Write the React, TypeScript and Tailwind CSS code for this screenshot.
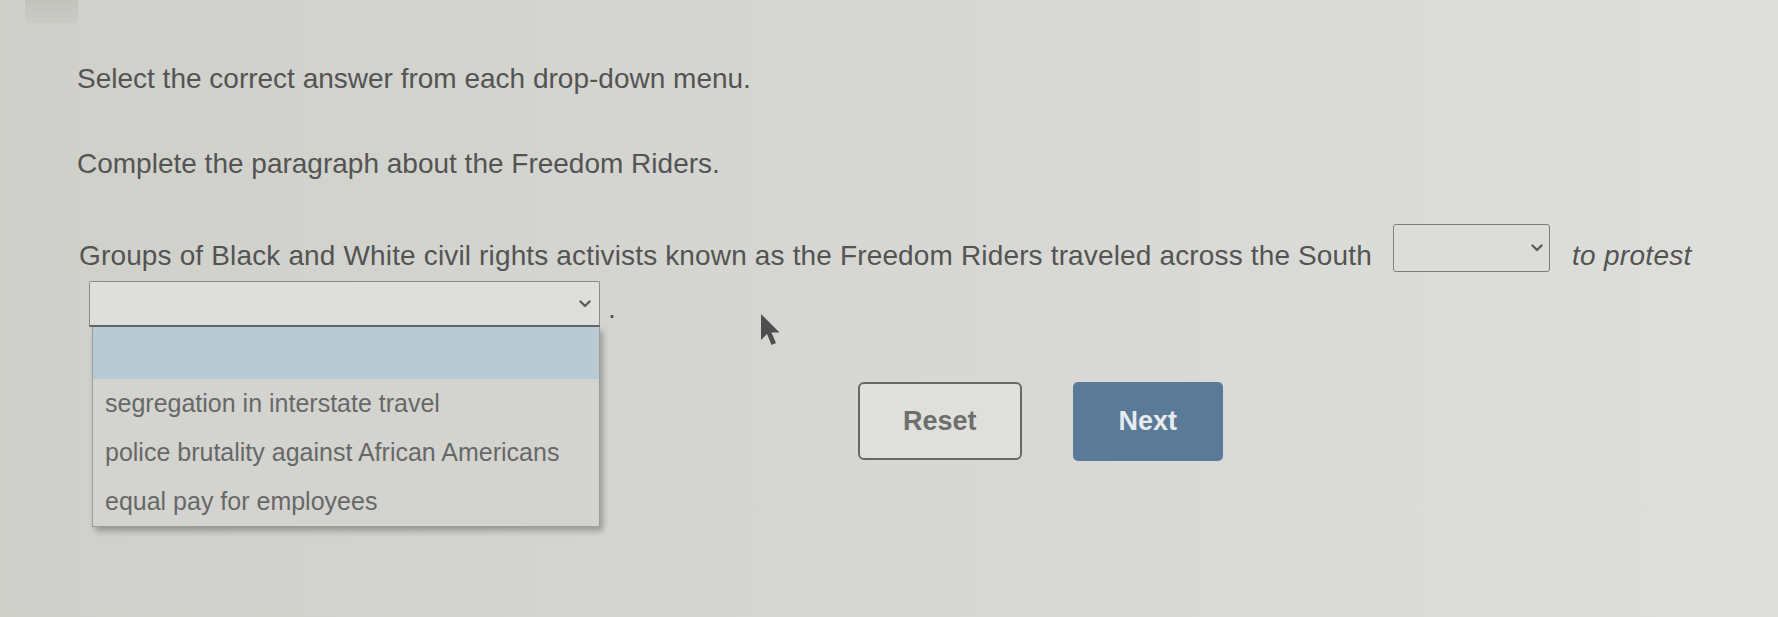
import React from "react";

const options = [
  "segregation in interstate travel",
  "police brutality against African Americans",
  "equal pay for employees",
];

function Chevron() {
  return (
    <svg width="12" height="8" viewBox="0 0 12 8" fill="none">
      <polyline points="1.5,1.5 6,6 10.5,1.5" stroke="#5e5e5e" strokeWidth="2.4" strokeLinecap="round" strokeLinejoin="round" />
    </svg>
  );
}

function Cursor() {
  return (
    <svg width="22" height="34" viewBox="0 0 22 34" className="absolute left-[760px] top-[313px]">
      <path d="M1 1 L1 27 L7 21 L11.5 32 L16 30 L11.5 19.5 L19.5 19.5 Z" fill="#4d4e4f" />
    </svg>
  );
}

export default function App() {
  return (
    <div className="relative h-[617px] w-full overflow-hidden bg-linear-to-r from-[#cfd0ca] to-[#dedfdb] font-['Liberation_Sans',Arial,sans-serif] text-[#545454]">
      {/* leftover tab at the top */}
      <div className="flex h-[23px]">
        <div className="ml-[25px] h-full w-[53px] rounded-br-[3px] bg-linear-to-b from-[#c2c3bd] to-[#cacbc5]" />
      </div>

      <div className="pl-[77px] pt-[40px]">
        <p className="text-[28px] leading-[32px]">Select the correct answer from each drop-down menu.</p>
        <p className="mt-[53px] text-[28px] leading-[32px]">Complete the paragraph about the Freedom Riders.</p>

        <div className="mt-[44px] flex items-start pl-[2px] text-[28px] leading-[32px]">
          <span className="mt-[16px] whitespace-nowrap tracking-[0.15px]">
            Groups of Black and White civil rights activists known as the Freedom Riders traveled across the South
          </span>
          <div className="ml-[21px] flex h-[48px] w-[157px] shrink-0 items-center justify-end rounded-[3px] border-[1.5px] border-[#7d7d7d] bg-[#dcddd8] pr-[6px]">
            <Chevron />
          </div>
          <span className="ml-[22px] mt-[16px] whitespace-nowrap italic tracking-[0.3px]">to protest</span>
        </div>

        <div className="mt-[9px] flex items-start">
          <div className="ml-[12px] w-[511px] shrink-0">
            <div className="flex h-[46px] items-center justify-end rounded-t-[2px] border border-b-2 border-[#8a8a8a] border-b-[#656565] bg-[#dedfda] pr-[8px]">
              <Chevron />
            </div>
            <div className="ml-[3px] border border-t-0 border-[#9c9c9a] bg-[#d3d4cf] shadow-[3px_4px_6px_rgba(0,0,0,0.28)]">
              <div className="h-[52px] bg-[#b8cbd3]" />
              {options.map((o) => (
                <div key={o} className="flex h-[49px] items-center pl-[12px] text-[25px] text-[#686868]">
                  {o}
                </div>
              ))}
            </div>
          </div>
          <span className="ml-[8px] mt-[12px] text-[28px] leading-[32px]">.</span>

          <div className="ml-[242px] mt-[101px] flex gap-[51px]">
            <button className="flex h-[78px] w-[164px] items-center justify-center rounded-[6px] border-2 border-[#686868] bg-[#dfe0db] text-[27px] font-bold text-[#6e6e6e]">
              Reset
            </button>
            <button className="flex h-[79px] w-[150px] items-center justify-center rounded-[5px] bg-[#5b7a98] text-[27px] font-bold text-[#e7ebee]">
              Next
            </button>
          </div>
        </div>
      </div>

      <Cursor />
    </div>
  );
}
